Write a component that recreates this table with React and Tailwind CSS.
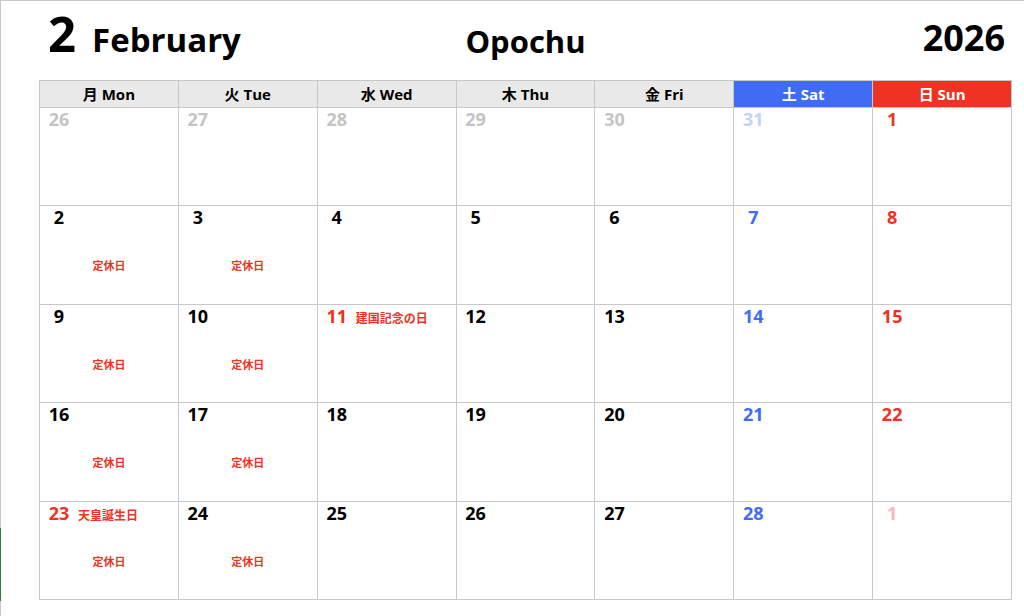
const FONT = "font-['Open_Sans','Noto_Sans_CJK_JP',sans-serif]";

const heads = [
  { label: "月 Mon", cls: "bg-[#e9e9e9] text-black" },
  { label: "火 Tue", cls: "bg-[#e9e9e9] text-black" },
  { label: "水 Wed", cls: "bg-[#e9e9e9] text-black" },
  { label: "木 Thu", cls: "bg-[#e9e9e9] text-black" },
  { label: "金 Fri", cls: "bg-[#e9e9e9] text-black" },
  { label: "土 Sat", cls: "bg-[#3f6cf3] text-white" },
  { label: "日 Sun", cls: "bg-[#ec3324] text-white" },
];

// c = number colour, off = 定休日, name = holiday
const weeks = [
  [
    { d: 26, c: "text-[#c4c4c4]" },
    { d: 27, c: "text-[#c4c4c4]" },
    { d: 28, c: "text-[#c4c4c4]" },
    { d: 29, c: "text-[#c4c4c4]" },
    { d: 30, c: "text-[#c4c4c4]" },
    { d: 31, c: "text-[#c5d2f7]" },
    { d: 1, c: "text-[#ec3324]" },
  ],
  [
    { d: 2, c: "text-black", off: true },
    { d: 3, c: "text-black", off: true },
    { d: 4, c: "text-black" },
    { d: 5, c: "text-black" },
    { d: 6, c: "text-black" },
    { d: 7, c: "text-[#3f6cf3]" },
    { d: 8, c: "text-[#ec3324]" },
  ],
  [
    { d: 9, c: "text-black", off: true },
    { d: 10, c: "text-black", off: true },
    { d: 11, c: "text-[#ec3324]", name: "建国記念の日" },
    { d: 12, c: "text-black" },
    { d: 13, c: "text-black" },
    { d: 14, c: "text-[#3f6cf3]" },
    { d: 15, c: "text-[#ec3324]" },
  ],
  [
    { d: 16, c: "text-black", off: true },
    { d: 17, c: "text-black", off: true },
    { d: 18, c: "text-black" },
    { d: 19, c: "text-black" },
    { d: 20, c: "text-black" },
    { d: 21, c: "text-[#3f6cf3]" },
    { d: 22, c: "text-[#ec3324]" },
  ],
  [
    { d: 23, c: "text-[#ec3324]", name: "天皇誕生日", off: true },
    { d: 24, c: "text-black", off: true },
    { d: 25, c: "text-black" },
    { d: 26, c: "text-black" },
    { d: 27, c: "text-black" },
    { d: 28, c: "text-[#3f6cf3]" },
    { d: 1, c: "text-[#f5b9b9]" },
  ],
];

function DayCell({ day }) {
  return (
    <div className="flex flex-col border-r border-b border-[#c8c8c8] bg-white">
      <div className="flex items-baseline">
        <span className={`ml-[4px] w-[30px] text-center text-[18px] font-bold leading-[23px] ${day.c}`}>
          {day.d}
        </span>
        {day.name && (
          <span className="ml-[4px] text-[12px] font-bold text-[#ec3324]">{day.name}</span>
        )}
      </div>
      {day.off && (
        <div className="mt-[30px] text-center text-[11px] font-bold leading-[14px] text-[#ec3324]">定休日</div>
      )}
    </div>
  );
}

export default function App() {
  return (
    <div className={`relative h-[616px] w-[1024px] border-t border-l border-[#c8c8c8] bg-white ${FONT}`}>
      <div className="absolute top-[527px] -left-px h-[73px] w-px bg-[#2e7d32]" />
      <div className="ml-[38px] grid h-[79px] w-[973px] grid-cols-[1fr_auto_1fr] items-start">
        <div className="ml-[9px] flex items-baseline pt-[8px]">
          <span className="text-[49px] font-bold leading-none text-black">2</span>
          <span className="ml-[16px] text-[33px] font-bold leading-none text-black">February</span>
        </div>
        <div className="pt-[25px] text-center text-[31px] font-bold leading-none text-black">Opochu</div>
        <div className="pt-[19px] pr-[7px] text-right text-[36px] font-bold leading-none text-black">2026</div>
      </div>

      <div className="ml-[38px] grid h-[520px] w-[973px] grid-cols-7 grid-rows-[27px_repeat(5,1fr)] border-t border-l border-[#c8c8c8]">
        {heads.map((h) => (
          <div
            key={h.label}
            className={`flex items-center justify-center border-r border-b border-[#c8c8c8] text-[15px] font-bold ${h.cls}`}
          >
            {h.label}
          </div>
        ))}
        {weeks.map((w, i) => w.map((day, j) => <DayCell key={`${i}-${j}`} day={day} />))}
      </div>
    </div>
  );
}
